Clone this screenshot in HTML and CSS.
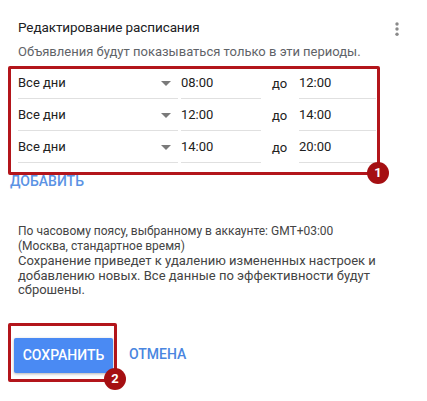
FILE: index.html
```html
<!DOCTYPE html>
<html lang="ru">
<head>
<meta charset="utf-8">
<link rel="stylesheet" href="styles.css">
</head>
<body>
<div class="card">
  <div class="header">
    <div class="title">Редактирование расписания</div>
    <svg class="kebab" width="4" height="14" viewBox="0 0 4 14"><circle cx="2" cy="2" r="1.7"/><circle cx="2" cy="7" r="1.7"/><circle cx="2" cy="12.3" r="1.7"/></svg>
  </div>
  <div class="subtitle">Объявления будут показываться только в эти периоды.</div>

  <div class="mark mark-rows">
    <div class="rows">
      <div class="row">
        <div class="field sel"><span>Все дни</span><i class="arrow"></i></div>
        <div class="field time">08:00</div>
        <div class="to">до</div>
        <div class="field time2">12:00</div>
      </div>
      <div class="row">
        <div class="field sel"><span>Все дни</span><i class="arrow"></i></div>
        <div class="field time">12:00</div>
        <div class="to">до</div>
        <div class="field time2">14:00</div>
      </div>
      <div class="row">
        <div class="field sel"><span>Все дни</span><i class="arrow"></i></div>
        <div class="field time">14:00</div>
        <div class="to">до</div>
        <div class="field time2">20:00</div>
      </div>
    </div>
    <span class="badge">1</span>
  </div>
  <div class="add">ДОБАВИТЬ</div>

  <div class="note">
    <div class="note-tz">По часовому поясу, выбранному в аккаунте: GMT+03:00<br>(Москва, стандартное время)</div>
    <div class="note-warn">Сохранение приведет к удалению измененных настроек и добавлению новых. Все данные по эффективности будут сброшены.</div>
  </div>

  <div class="actions">
    <div class="mark mark-btn">
      <button class="save">СОХРАНИТЬ</button>
      <span class="badge">2</span>
    </div>
    <span class="cancel">ОТМЕНА</span>
  </div>
</div>
</body>
</html>
```

FILE: styles.css
```css
html, body {
  margin: 0;
  padding: 0;
  background: #ffffff;
}
body {
  font-family: Roboto, "Noto Sans", "Liberation Sans", sans-serif;
  color: #212121;
  width: 427px;
  height: 401px;
  overflow: hidden;
}
.header {
  display: flex;
  justify-content: space-between;
  align-items: flex-start;
  padding: 17px 28px 0 18px;
  height: 20px;
}
.title {
  font-size: 13.5px;
  letter-spacing: -0.1px;
  line-height: 20px;
  color: #202124;
}
.kebab {
  fill: #8a8a8a;
  margin-top: 5px;
}
.subtitle {
  margin: 7px 0 0 18px;
  font-size: 13px;
  line-height: 16px;
  color: #5f6368;
}
.mark {
  position: relative;
  border: 3px solid #b3151b;
  border-radius: 2px;
  box-sizing: border-box;
}
.mark-rows {
  margin: 6px 0 0 8px;
  width: 372px;
  padding: 0 1px 9px 7px;
}
.rows {
  margin-top: -2px;
}
.row {
  display: flex;
  height: 32px;
}
.field {
  box-sizing: border-box;
  height: 32px;
  border-bottom: 1px solid #e0e0e0;
  font-size: 13px;
  line-height: 20px;
  padding-top: 6px;
}
.sel {
  width: 160px;
  display: flex;
  justify-content: space-between;
}
.arrow {
  width: 0;
  height: 0;
  border-left: 5px solid transparent;
  border-right: 5px solid transparent;
  border-top: 5px solid #7a7a7a;
  margin: 8px 7px 0 0;
}
.time {
  width: 80px;
  margin-left: 3px;
}
.to {
  width: 27px;
  padding-left: 11px;
  font-size: 13px;
  line-height: 20px;
  padding-top: 7px;
}
.time2 {
  width: 77px;
}
.badge {
  position: absolute;
  width: 22px;
  height: 22px;
  border-radius: 50%;
  background: #a50f12;
  color: #ffffff;
  font-weight: 700;
  font-size: 13px;
  line-height: 22px;
  text-align: center;
}
.mark-rows .badge {
  right: -12px;
  bottom: -12px;
}
.add {
  margin: -2px 0 0 10px;
  font-size: 14px;
  line-height: 16px;
  font-weight: 500;
  color: #5b93e4;
}
.note {
  margin: 35px 0 0 18px;
  width: 380px;
  color: #444444;
}
.note-tz {
  font-size: 12px;
  line-height: 15px;
}
.note-warn {
  font-size: 13px;
  line-height: 14.5px;
}
.actions {
  display: flex;
  align-items: center;
  margin-top: 25px;
}
.mark-btn {
  margin-left: 8px;
  width: 109px;
  height: 59px;
  padding: 12px 1px 6px 3px;
}
.mark-btn .badge {
  right: -12px;
  bottom: -11px;
}
.save {
  display: block;
  width: 99px;
  height: 35px;
  border: none;
  border-radius: 2px;
  background: #4a8af3;
  color: #ffffff;
  font-family: Roboto, "Noto Sans", "Liberation Sans", sans-serif;
  font-size: 14px;
  font-weight: 500;
  padding: 0;
  box-shadow: 0 1px 3px rgba(0, 0, 0, 0.3);
}
.cancel {
  margin: 4px 0 0 12px;
  font-size: 14px;
  font-weight: 500;
  color: #4a86e0;
}
```
